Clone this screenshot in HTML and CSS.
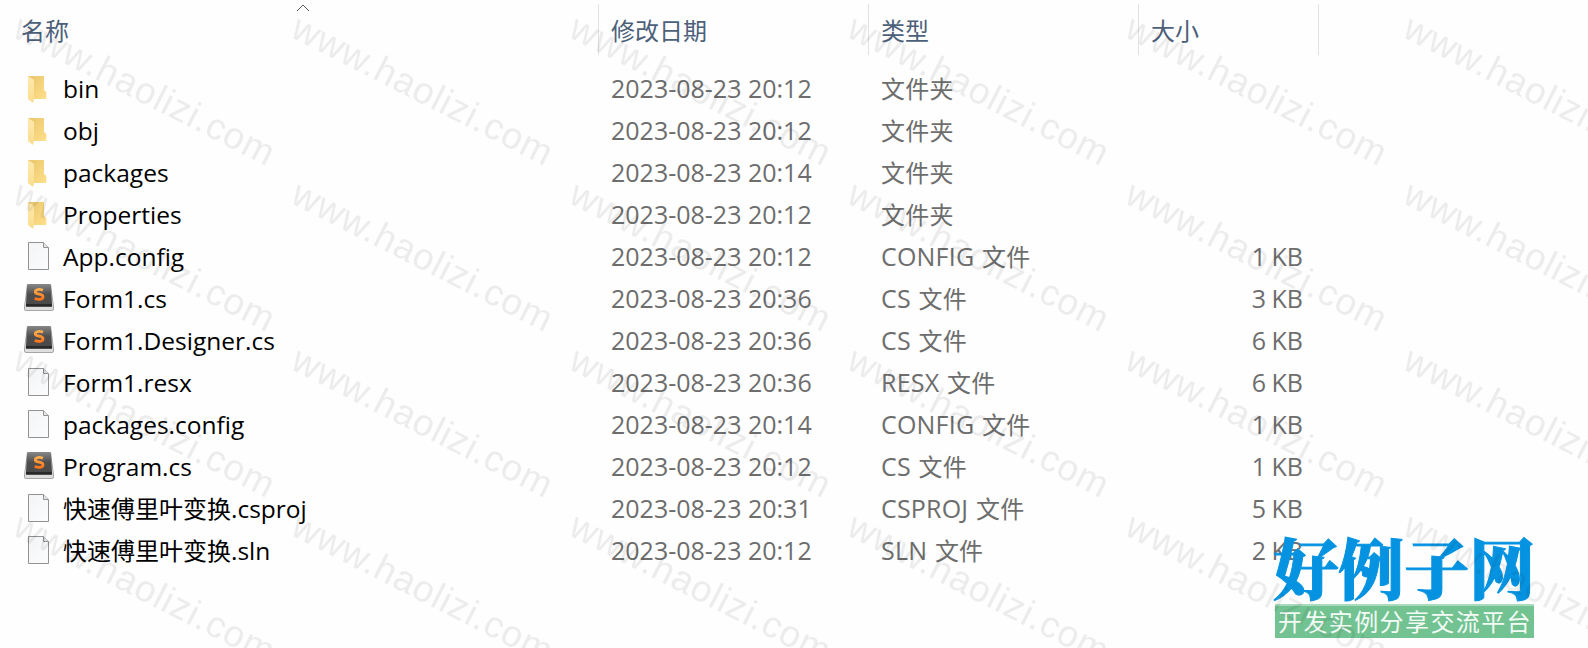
FILE: index.html
```
<!DOCTYPE html>
<html lang="zh-CN">
<head>
    <meta charset="UTF-8">
    <meta name="viewport" content="width=device-width, initial-scale=1.0">
    <title>快速傅里叶变换</title>
    <link rel="stylesheet" href="styles.css">
</head>
<body>
    <!-- Icons -->
    <svg class="defs" width="0" height="0">
        <defs>
            <linearGradient id="folderBack" x1="0" y1="0" x2="1" y2="1">
                <stop offset="0" stop-color="#e9c66c"/>
                <stop offset="1" stop-color="#ffdf8a"/>
            </linearGradient>
            <linearGradient id="folderFront" x1="0" y1="0" x2="0" y2="1">
                <stop offset="0" stop-color="#ffeab0"/>
                <stop offset="1" stop-color="#fbdc8c"/>
            </linearGradient>
            <linearGradient id="paper" x1="0" y1="0" x2="1" y2="1">
                <stop offset="0" stop-color="#f2f4f5"/>
                <stop offset="1" stop-color="#fbfcfd"/>
            </linearGradient>
            <linearGradient id="key" x1="0" y1="0" x2="0" y2="1">
                <stop offset="0" stop-color="#878787"/>
                <stop offset="0.5" stop-color="#4f4f4f"/>
                <stop offset="1" stop-color="#494949"/>
            </linearGradient>
            <linearGradient id="letter" x1="0" y1="0" x2="0" y2="1">
                <stop offset="0" stop-color="#ffad4d"/>
                <stop offset="1" stop-color="#ff7418"/>
            </linearGradient>
            <symbol id="folder" viewBox="0 0 32 30">
                <path d="M5 3H21V17L23.3 19V26H5Z" fill="url(#folderBack)"/>
                <path d="M5 3L11 7V26L10 30L5 26Z" fill="url(#folderFront)"/>
            </symbol>
            <symbol id="file" viewBox="0 0 32 30">
                <path d="M5.5 1.5H20.5L25.5 6.5V28.5H5.5Z" fill="url(#paper)" stroke="#929292"/>
                <path d="M20.5 1.5V6.5H25.5" fill="#e4e6e8" stroke="#929292"/>
            </symbol>
            <symbol id="sublime" viewBox="0 0 32 30">
                <path d="M4.5 1.5H27.5L30.5 24V26Q30.500 27.500 29 27.500H3Q1.500 27.500 1.500 26V24Z" fill="#dedede" stroke="#a6a6a6"/>
                <path d="M5.500 1H26.500Q27.700 1 28 2.500L29 21.500H3L4 2.500Q4.300 1 5.500 1Z" fill="url(#key)"/>
                <path d="M3 21H29V23.800H3Z" fill="#292929"/>
                <path d="M20 7.300C17 6 12.300 6 12.300 9C12.300 12 20 10.300 20 13.700C20 17 15 16.800 11.700 15.500" fill="none" stroke="url(#letter)" stroke-width="2.800"/>
            </symbol>
        </defs>
    </svg>

    <div class="explorer">
        <div class="header">
            <div class="head name-head">名称
                <svg class="sort" width="14" height="8" viewBox="0 0 14 8"><path d="M1 7L7 1L13 7" fill="none" stroke="#555"/></svg>
            </div>
            <div class="head">修改日期</div>
            <div class="head">类型</div>
            <div class="head">大小</div>
        </div>

        <div class="list">
            <div class="row">
                <div class="name"><svg class="icon"><use href="#folder"/></svg><span>bin</span></div>
                <div class="date">2023-08-23 20:12</div>
                <div class="type"><span class="cn">文件夹</span></div>
                <div class="size"></div>
            </div>
            <div class="row">
                <div class="name"><svg class="icon"><use href="#folder"/></svg><span>obj</span></div>
                <div class="date">2023-08-23 20:12</div>
                <div class="type"><span class="cn">文件夹</span></div>
                <div class="size"></div>
            </div>
            <div class="row">
                <div class="name"><svg class="icon"><use href="#folder"/></svg><span>packages</span></div>
                <div class="date">2023-08-23 20:14</div>
                <div class="type"><span class="cn">文件夹</span></div>
                <div class="size"></div>
            </div>
            <div class="row">
                <div class="name"><svg class="icon"><use href="#folder"/></svg><span>Properties</span></div>
                <div class="date">2023-08-23 20:12</div>
                <div class="type"><span class="cn">文件夹</span></div>
                <div class="size"></div>
            </div>
            <div class="row">
                <div class="name"><svg class="icon"><use href="#file"/></svg><span>App.config</span></div>
                <div class="date">2023-08-23 20:12</div>
                <div class="type">CONFIG <span class="cn">文件</span></div>
                <div class="size">1 KB</div>
            </div>
            <div class="row">
                <div class="name"><svg class="icon"><use href="#sublime"/></svg><span>Form1.cs</span></div>
                <div class="date">2023-08-23 20:36</div>
                <div class="type">CS <span class="cn">文件</span></div>
                <div class="size">3 KB</div>
            </div>
            <div class="row">
                <div class="name"><svg class="icon"><use href="#sublime"/></svg><span>Form1.Designer.cs</span></div>
                <div class="date">2023-08-23 20:36</div>
                <div class="type">CS <span class="cn">文件</span></div>
                <div class="size">6 KB</div>
            </div>
            <div class="row">
                <div class="name"><svg class="icon"><use href="#file"/></svg><span>Form1.resx</span></div>
                <div class="date">2023-08-23 20:36</div>
                <div class="type">RESX <span class="cn">文件</span></div>
                <div class="size">6 KB</div>
            </div>
            <div class="row">
                <div class="name"><svg class="icon"><use href="#file"/></svg><span>packages.config</span></div>
                <div class="date">2023-08-23 20:14</div>
                <div class="type">CONFIG <span class="cn">文件</span></div>
                <div class="size">1 KB</div>
            </div>
            <div class="row">
                <div class="name"><svg class="icon"><use href="#sublime"/></svg><span>Program.cs</span></div>
                <div class="date">2023-08-23 20:12</div>
                <div class="type">CS <span class="cn">文件</span></div>
                <div class="size">1 KB</div>
            </div>
            <div class="row">
                <div class="name"><svg class="icon"><use href="#file"/></svg><span><span class="cn">快速傅里叶变换</span>.csproj</span></div>
                <div class="date">2023-08-23 20:31</div>
                <div class="type">CSPROJ <span class="cn">文件</span></div>
                <div class="size">5 KB</div>
            </div>
            <div class="row">
                <div class="name"><svg class="icon"><use href="#file"/></svg><span><span class="cn">快速傅里叶变换</span>.sln</span></div>
                <div class="date">2023-08-23 20:12</div>
                <div class="type">SLN <span class="cn">文件</span></div>
                <div class="size">2 KB</div>
            </div>
        </div>
    </div>

    <div class="logo">
        <div class="logo-title">好例子网</div>
        <div class="logo-sub">开发实例分享交流平台</div>
    </div>

    <!-- Watermark over the whole page -->
    <svg class="watermark">
        <defs>
            <pattern id="mark" x="5" y="8" width="278" height="166" patternUnits="userSpaceOnUse">
                <text class="mark-text" transform="translate(6 28) rotate(27)" textLength="287">www.haolizi.com</text>
            </pattern>
        </defs>
        <rect width="100%" height="100%" fill="url(#mark)"/>
    </svg>
</body>
</html>
```
FILE: styles.css
```
body {
    margin: 0;
    height: 648px;
    overflow: hidden;
    position: relative;
    background-color: #fefefe;
    font-family: "Open Sans", "Noto Sans CJK SC", sans-serif;
    font-size: 25px;
    color: #6d6d6d;
}

.defs {
    position: absolute;
}

.header,
.row {
    display: grid;
    grid-template-columns: 599px 270px 270px 180px;
}

.header {
    padding-top: 4px;
    margin-bottom: 13px;
}

.head {
    box-sizing: border-box;
    height: 51px;
    padding-left: 12px;
    line-height: 51px;
    font-size: 24px;
    color: #4c607a;
    border-right: 1px solid #e2e2e2;
    font-family: "Noto Sans CJK SC", sans-serif;
}

.name-head {
    position: relative;
    padding-left: 21px;
}

/* sort arrow sits above the column title */
.sort {
    position: absolute;
    top: 0;
    left: 296px;
}

.row {
    height: 42px;
    line-height: 41px;
    white-space: nowrap;
}

.name {
    display: flex;
    gap: 8px;
    padding-left: 23px;
    color: #000000;
    font-size: 24.5px;
}

.icon {
    width: 32px;
    height: 30px;
    margin-top: 5px;
}

.date,
.type {
    padding-left: 12px;
}

.type {
    letter-spacing: 0.2px;
    word-spacing: 1px;
}

.size {
    padding-right: 16px;
    text-align: right;
    word-spacing: -1px;
}

.cn {
    font-family: "Noto Sans CJK SC", sans-serif;
    font-size: 24px;
    line-height: 1;
}

.logo {
    position: absolute;
    left: 1273px;
    top: 536px;
    width: 261px;
    white-space: nowrap;
}

.logo-title {
    height: 68px;
    line-height: 60px;
    font-family: "Noto Serif CJK SC", "Noto Sans CJK SC", serif;
    font-size: 65.500px;
    font-weight: 900;
    color: #0593e1;
    -webkit-text-stroke: 1px #0593e1;
}

.logo-sub {
    box-sizing: border-box;
    height: 34px;
    margin-left: 2px;
    padding-left: 3px;
    line-height: 29px;
    background-color: #72c391;
    border-top: 2px solid #a8dabb;
    color: #f4fbf6;
    font-family: "Noto Sans CJK SC", sans-serif;
    font-size: 24px;
    letter-spacing: 1.400px;
}

.watermark {
    position: absolute;
    top: 0;
    left: 0;
    width: 100%;
    height: 100%;
    pointer-events: none;
}

.mark-text {
    font-family: "Liberation Sans", Arial, sans-serif;
    font-size: 37px;
    fill: rgba(0, 0, 0, 0.07);
}
```
